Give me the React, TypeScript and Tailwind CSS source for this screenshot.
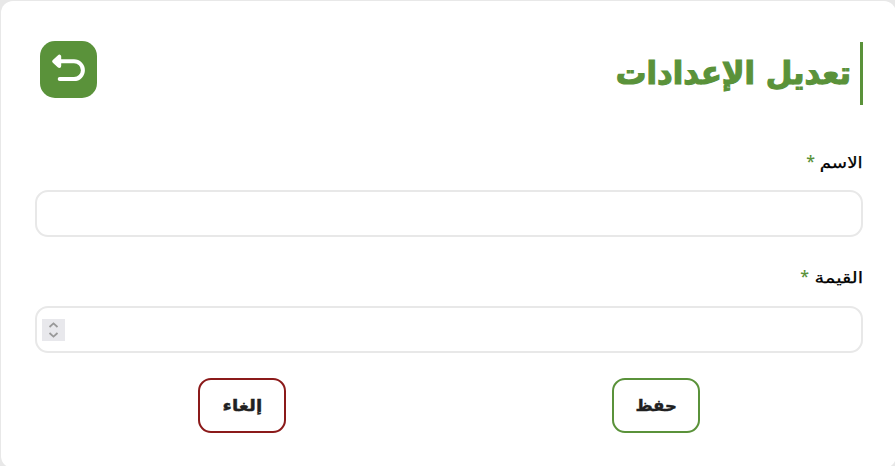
const fields = [
    { id: "name", label: "الاسم", type: "text", rowClass: "mt-[46px]", gapClass: "mt-[15px]", labelClass: "w-[42px]", textClass: "scale-x-[1.14]" },
    { id: "value", label: "القيمة", type: "number", rowClass: "mt-[29px]", gapClass: "mt-4", labelClass: "w-[48px]", textClass: "scale-x-[1.21]" },
];

function BackIcon() {
    return (
        <svg width="57" height="57" viewBox="0 0 57 57" fill="none">
            <path d="M20 20.3H34a8.9 8.9 0 0 1 0 17.8H19.7" stroke="white" strokeWidth="4" strokeLinecap="round" />
            <path d="M14.1 20.3L19.3 15.6V25Z" fill="white" stroke="white" strokeWidth="3.8" strokeLinejoin="round" />
        </svg>
    );
}

function Spinner() {
    return (
        <span className="flex h-[22px] w-[23px] items-center justify-center bg-[#e8e8ec]">
            <svg width="23" height="22" viewBox="0 0 23 22" fill="none" stroke="#999" strokeWidth="1.8">
                <path d="M7.5 8L11.5 4.4L15.5 8" />
                <path d="M7.5 14L11.5 17.6L15.5 14" />
            </svg>
        </span>
    );
}

export default function App() {
    return (
        <main className="h-[466px] w-[895px] overflow-hidden bg-[#e8e8e8] pt-px font-['DejaVu_Sans',sans-serif]" lang="ar">
            <div className="ml-px h-[467px] w-[895px] rounded-xl bg-white pl-[34px] pt-10">
                <div dir="rtl" className="w-[828px]">

                    {/* header */}
                    <div className="flex h-16 items-start justify-between">
                        <h1 className="mt-px flex h-[63px] items-center border-r-3 border-[#5a923a] pr-[9px] pb-0.5 text-[32px] font-bold whitespace-nowrap text-[#5a923a]">
                            <span className="inline-block origin-right scale-x-[0.956] [-webkit-text-stroke:1.2px_#5a923a]">تعديل الإعدادات</span>
                        </h1>
                        <button className="ml-[5px] h-[57px] w-[57px] rounded-[15px] bg-[#5a923a]">
                            <BackIcon />
                        </button>
                    </div>

                    {/* fields */}
                    {fields.map((field) => (
                        <div key={field.id} className={field.rowClass}>
                            <label htmlFor={field.id} className="flex h-6 items-center gap-1.5 text-base leading-6 text-black">
                                <span className={field.labelClass}>
                                    <span className={`inline-block origin-right [-webkit-text-stroke:0.25px_black] ${field.textClass}`}>{field.label}</span>
                                </span>
                                <span className="pb-1 font-['Open_Sans',sans-serif] font-semibold text-[#5a923a]">*</span>
                            </label>
                            <div className={`flex h-[47px] items-center rounded-[13px] border-2 border-[#e8e8e8] pl-[5px] ${field.gapClass}`}>
                                <input id={field.id} inputMode={field.type === "number" ? "numeric" : "text"} className="h-full min-w-0 flex-1 px-3 outline-none" />
                                {field.type === "number" && <Spinner />}
                            </div>
                        </div>
                    ))}

                    {/* actions */}
                    <div className="mt-[25px] grid grid-cols-2 justify-items-center text-base font-bold text-[#212121]">
                        <button className="h-[55px] w-[88px] rounded-[13px] border-2 border-[#5a923a]">
                            <span className="inline-block scale-x-[1.03] [-webkit-text-stroke:0.4px_#212121]">حفظ</span>
                        </button>
                        <button className="h-[55px] w-[88px] rounded-[13px] border-2 border-[#8b1a1a]">
                            <span className="inline-block scale-x-[1.14] [-webkit-text-stroke:0.4px_#212121]">إلغاء</span>
                        </button>
                    </div>
                </div>
            </div>
        </main>
    );
}
